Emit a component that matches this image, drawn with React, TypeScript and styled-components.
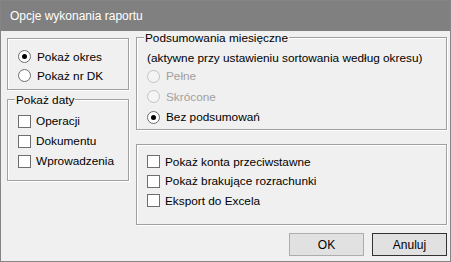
import React from "react";
import styled, {createGlobalStyle} from "styled-components";

const GlobalStyle = createGlobalStyle`
  html, body {
    margin: 0;
    padding: 0;
    background: #ffffff;
  }
  body {
    font-family: "Liberation Sans", Arial, sans-serif;
    font-size: 11.8px;
    color: #000;
  }
`;

const Window = styled.div`
  width: 451px;
  height: 262px;
  box-sizing: border-box;
  border: 1px solid #858585;
  background: #f0f0f0;
  display: flex;
  flex-direction: column;
`;

const TitleBar = styled.div`
  height: 30px;
  flex: none;
  background: #808080;
  color: #ffffff;
  font-size: 12px;
  display: flex;
  align-items: center;
  padding-left: 9px;
`;

const Body = styled.div`
  display: flex;
  padding: 0 3px 0 6px;
  gap: 7px;
`;

const Column = styled.div<{$width: number; $top: number}>`
  width: ${p => p.$width}px;
  margin-top: ${p => p.$top}px;
  display: flex;
  flex-direction: column;
`;

const Group = styled.div<{$height: number; $padTop: number; $padLeft: number; $mt?: number}>`
  position: relative;
  box-sizing: border-box;
  height: ${p => p.$height}px;
  margin-top: ${p => p.$mt || 0}px;
  border: 1px solid #a0a0a0;
  box-shadow: inset 1px 1px 0 #ffffff, 1px 1px 0 #ffffff;
  padding: ${p => p.$padTop}px 0 0 ${p => p.$padLeft}px;
  display: flex;
  flex-direction: column;
`;

const Legend = styled.span`
  position: absolute;
  top: -7px;
  left: 7px;
  padding: 0 1px;
  background: #f0f0f0;
  line-height: 14px;
`;

const Note = styled.div`
  height: 16px;
  line-height: 17px;
`;

const Row = styled.div<{$h: number; $disabled?: boolean}>`
  height: ${p => p.$h}px;
  display: flex;
  align-items: center;
  gap: 5px;
  color: ${p => (p.$disabled ? "#a0a0a0" : "#000")};
`;

const RadioMark = styled.span<{$checked?: boolean; $disabled?: boolean}>`
  width: 11px;
  height: 11px;
  flex: none;
  border-radius: 50%;
  border: 1px solid ${p => (p.$disabled ? "#c2c2c2" : "#6e6e6e")};
  background: ${p => (p.$disabled ? "#f4f4f4" : "#ffffff")};
  display: flex;
  align-items: center;
  justify-content: center;
  margin-right: 1px;
  &::after {
    content: "";
    width: 5px;
    height: 5px;
    border-radius: 50%;
    background: #000;
    display: ${p => (p.$checked ? "block" : "none")};
  }
`;

const CheckMark = styled.span`
  width: 11px;
  height: 11px;
  flex: none;
  border: 1px solid #6e6e6e;
  background: #ffffff;
`;

const ButtonRow = styled.div`
  display: flex;
  justify-content: flex-end;
  gap: 8px;
  margin-top: 8px;
`;

const Button = styled.button<{$default?: boolean}>`
  width: 75px;
  height: 23px;
  box-sizing: border-box;
  border: 1px solid ${p => (p.$default ? "#333333" : "#adadad")};
  background: #e1e1e1;
  font-family: "Liberation Sans", Arial, sans-serif;
  font-size: 12px;
  color: #000;
  padding: 0;
`;

const Radio = ({label, checked, disabled, h}: {label: string; checked?: boolean; disabled?: boolean; h: number}) => (
  <Row $h={h} $disabled={disabled}>
    <RadioMark $checked={checked} $disabled={disabled} />
    {label}
  </Row>
);

const Check = ({label, h}: {label: string; h: number}) => (
  <Row $h={h}>
    <CheckMark />
    {label}
  </Row>
);

export default function App() {
  return (
    <>
      <GlobalStyle />
      <Window>
        <TitleBar>Opcje wykonania raportu</TitleBar>
        <Body>
          <Column $width={122} $top={7}>
            <Group $height={52} $padTop={8} $padLeft={10}>
              <Radio label="Pokaż okres" checked h={19} />
              <Radio label="Pokaż nr DK" h={19} />
            </Group>
            <Group $height={82} $padTop={11} $padLeft={10} $mt={9}>
              <Legend>Pokaż daty</Legend>
              <Check label="Operacji" h={20} />
              <Check label="Dokumentu" h={20} />
              <Check label="Wprowadzenia" h={20} />
            </Group>
          </Column>
          <Column $width={311} $top={6}>
            <Group $height={93} $padTop={12} $padLeft={10}>
              <Legend>Podsumowania miesięczne</Legend>
              <Note>(aktywne przy ustawieniu sortowania według okresu)</Note>
              <Radio label="Pełne" disabled h={20} />
              <Radio label="Skrócone" disabled h={21} />
              <Radio label="Bez podsumowań" checked h={20} />
            </Group>
            <Group $height={81} $padTop={7} $padLeft={10} $mt={14}>
              <Check label="Pokaż konta przeciwstawne" h={19.5} />
              <Check label="Pokaż brakujące rozrachunki" h={19.5} />
              <Check label="Eksport do Excela" h={19.5} />
            </Group>
            <ButtonRow>
              <Button>OK</Button>
              <Button $default>Anuluj</Button>
            </ButtonRow>
          </Column>
        </Body>
      </Window>
    </>
  );
}
